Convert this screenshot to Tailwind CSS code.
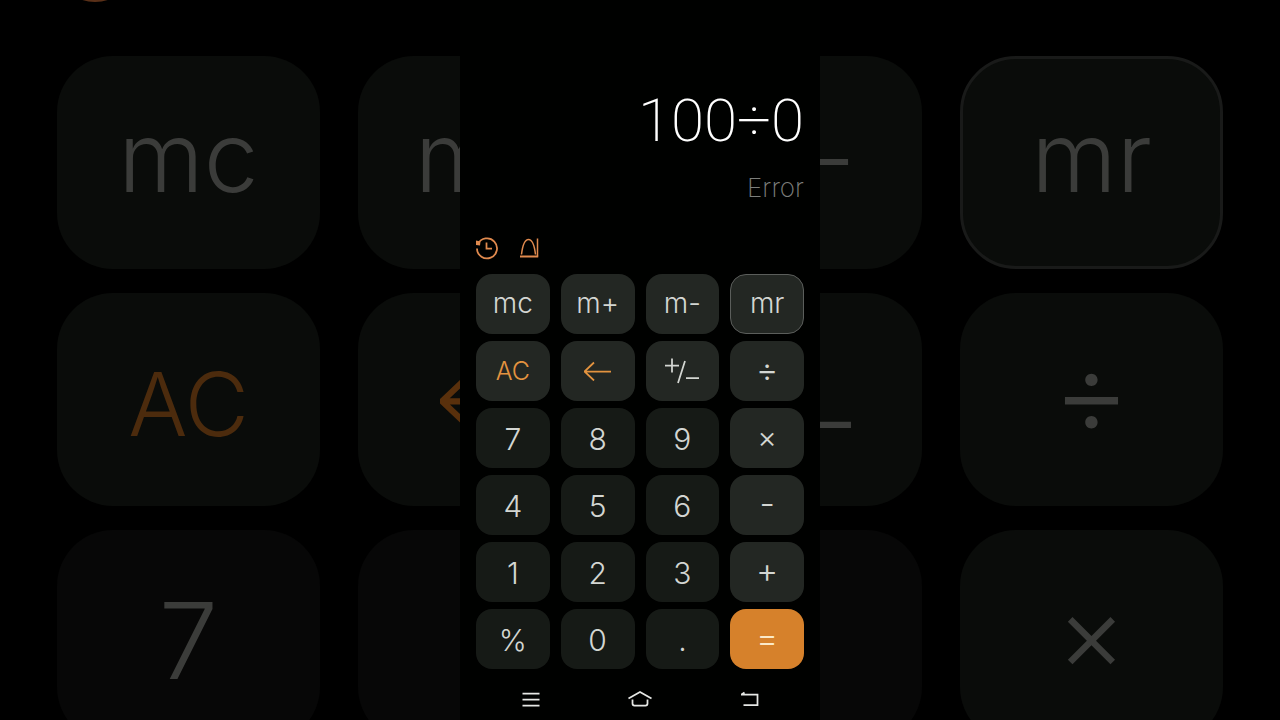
<!DOCTYPE html>
<html lang="en">
<head>
  <meta charset="UTF-8">
  <meta name="viewport" content="width=device-width, initial-scale=1.0">
  <title>Calculator</title>
  <!-- Tailwind CSS -->
  <script src="https://cdn.jsdelivr.net/npm/@tailwindcss/browser@4"></script>
</head>
<body class="relative min-h-screen overflow-hidden bg-black font-['Inter','Liberation_Sans',sans-serif] antialiased">
  <!-- Enlarged, dimmed keypad behind the phone -->
  <div aria-hidden="true" class="absolute inset-0 overflow-hidden px-[57px] font-light text-[#3b3c3a]">
    <svg class="-mt-[82px] mb-[54px] h-[84px] w-[76px] text-[#5a3018]" viewBox="0 0 76 84" fill="none" stroke="currentColor" stroke-width="6">
      <circle cx="38" cy="45" r="36" />
    </svg>
    <div class="grid auto-rows-[213px] grid-cols-4 gap-x-[38px] gap-y-[24px] text-[98px]">
      <div class="flex items-center justify-center rounded-[56px] bg-[#0a0c0a] pb-3">mc</div>
      <div class="flex items-center justify-center rounded-[56px] bg-[#0a0c0a] pb-3">m+</div>
      <div class="flex items-center justify-center rounded-[56px] bg-[#0a0c0a] pb-3">m-</div>
      <div class="flex items-center justify-center rounded-[56px] border-3 border-[#191a19] bg-[#0a0c0a] pb-3">mr</div>
      <div class="flex items-center justify-center rounded-[56px] bg-[#0a0c0a] pt-2 text-[88px] text-[#4c2b0d]">AC</div>
      <div class="flex items-center justify-center rounded-[56px] bg-[#0a0c0a]">
        <svg class="h-[71px] w-[100px] text-[#59300c]" viewBox="0 0 28 20" fill="none" stroke="currentColor" stroke-width="1.750"><path d="M27 10.500H1M10 1.500L.5 10.500l9.500 9" /></svg>
      </div>
      <div class="flex items-center justify-center rounded-[56px] bg-[#0a0c0a]">
        <svg class="h-[100px] w-[121px]" viewBox="0 0 34 28" fill="none" stroke="currentColor" stroke-width="1.750"><path d="M0 8.500h14M7 1.500v14M20 4l-7 22M21 21h13" /></svg>
      </div>
      <div class="flex items-center justify-center rounded-[56px] bg-[#0a0c0a] pb-4 text-[120px]">÷</div>
      <div class="flex items-center justify-center rounded-[56px] bg-[#070707] pt-2 text-[106px]">7</div>
      <div class="rounded-[56px] bg-[#070707]"></div>
      <div class="rounded-[56px] bg-[#070707]"></div>
      <div class="flex items-center justify-center rounded-[56px] bg-[#0a0c0a] pb-2 text-[106px]">×</div>
    </div>
  </div>

  <!-- Phone -->
  <main class="relative mx-auto flex min-h-screen w-full max-w-[360px] flex-col bg-[#000100] px-4 text-[#d3d6d2]">
    <output class="mt-[85px] block text-right font-['Roboto','Liberation_Sans',sans-serif] text-[60px] leading-[72px] font-extralight text-white">100÷0</output>
    <p class="mt-[11px] text-right text-[26px] leading-10 font-extralight text-[#7c7e7b]">Error</p>

    <div class="mt-7 flex gap-5 text-[#e08a4e]">
      <button type="button" aria-label="History">
        <svg class="size-6" viewBox="0 0 24 24" fill="none" stroke="currentColor" stroke-width="1.750">
          <path d="M2 8A10 10 0 1 1 1 12.500M10.500 6.500v6h5.500" />
          <path d="M0 4.500l4.500 1-.5 4-4-.5z" fill="currentColor" stroke="none" />
        </svg>
      </button>
      <button type="button" aria-label="Graph">
        <svg class="size-6" viewBox="0 0 24 24" fill="none" stroke="currentColor" stroke-width="1.500">
          <path d="M1.500 18.500C2.500 10 4 3.500 8.500 3.500S14.500 10 15.500 18.500M17.500 2.500v18" />
          <path d="M0 20.500h18.200" stroke-width="2" />
        </svg>
      </button>
    </div>

    <div class="mt-3.5 grid auto-rows-[60px] grid-cols-4 gap-x-[11px] gap-y-[7px] text-[30px] font-light">
      <button type="button" class="rounded-2xl bg-[#232723] pb-0.5 text-[28px]">mc</button>
      <button type="button" class="rounded-2xl bg-[#232723] pb-0.5 text-[28px]">m+</button>
      <button type="button" class="rounded-2xl bg-[#232723] pb-0.5 text-[28px]">m-</button>
      <button type="button" class="rounded-2xl border border-[#5b5e5b] bg-[#232723] pb-0.5 text-[28px]">mr</button>

      <button type="button" class="rounded-2xl bg-[#232723] pt-0.5 text-[25px] text-[#e3933f]">AC</button>
      <button type="button" aria-label="Backspace" class="flex items-center justify-center rounded-2xl bg-[#232723] text-[#e3933f]">
        <svg class="h-5 w-7" viewBox="0 0 28 20" fill="none" stroke="currentColor" stroke-width="1.750"><path d="M27 10.500H1M10 1.500L.5 10.500l9.500 9" /></svg>
      </button>
      <button type="button" aria-label="Plus or minus" class="flex items-center justify-center rounded-2xl bg-[#232723]">
        <svg class="h-7 w-[34px]" viewBox="0 0 34 28" fill="none" stroke="currentColor" stroke-width="1.750"><path d="M0 8.500h14M7 1.500v14M20 4l-7 22M21 21h13" /></svg>
      </button>
      <button type="button" class="rounded-2xl bg-[#232723] pb-1 text-[34px]">÷</button>

      <button type="button" class="rounded-2xl bg-[#161a16] pt-0.5">7</button>
      <button type="button" class="rounded-2xl bg-[#161a16] pt-0.5">8</button>
      <button type="button" class="rounded-2xl bg-[#161a16] pt-0.5">9</button>
      <button type="button" class="rounded-2xl bg-[#232723] pb-0.5">×</button>

      <button type="button" class="rounded-2xl bg-[#161a16] pt-0.5">4</button>
      <button type="button" class="rounded-2xl bg-[#161a16] pt-0.5">5</button>
      <button type="button" class="rounded-2xl bg-[#161a16] pt-0.5">6</button>
      <button type="button" class="rounded-2xl bg-[#232723] pb-1 text-[34px]">-</button>

      <button type="button" class="rounded-2xl bg-[#161a16] pt-0.5">1</button>
      <button type="button" class="rounded-2xl bg-[#161a16] pt-0.5">2</button>
      <button type="button" class="rounded-2xl bg-[#161a16] pt-0.5">3</button>
      <button type="button" class="rounded-2xl bg-[#232723] pb-1 text-[34px]">+</button>

      <button type="button" class="rounded-2xl bg-[#161a16] pt-0.5">%</button>
      <button type="button" class="rounded-2xl bg-[#161a16] pt-0.5">0</button>
      <button type="button" class="rounded-2xl bg-[#161a16] pt-0.5">.</button>
      <button type="button" class="rounded-2xl bg-[#d6812b] pb-1 text-[34px] text-[#fbe9c8]">=</button>
    </div>

    <!-- System navigation -->
    <nav class="mt-[18px] flex justify-around text-[#e6e8e5]">
      <button type="button" aria-label="Recent apps">
        <svg class="size-6" viewBox="0 0 24 24" fill="none" stroke="currentColor" stroke-width="1.750"><path d="M3.500 6.500h17M3.500 12.500h17M3.500 18.500h17" /></svg>
      </button>
      <button type="button" aria-label="Home">
        <svg class="size-6" viewBox="0 0 24 24" fill="none" stroke="currentColor" stroke-width="1.750"><path d="M.5 11.500L12 5l11.500 6.500M4.500 12.500v4q0 2 2 2h11q2 0 2-2v-4" /></svg>
      </button>
      <button type="button" aria-label="Back">
        <svg class="size-6" viewBox="0 0 24 24" fill="none" stroke="currentColor" stroke-width="1.750"><path d="M4 7.500H20.500v10.500H6.500M7.500 5.500L4.500 7.500" /></svg>
      </button>
    </nav>
  </main>
</body>
</html>
